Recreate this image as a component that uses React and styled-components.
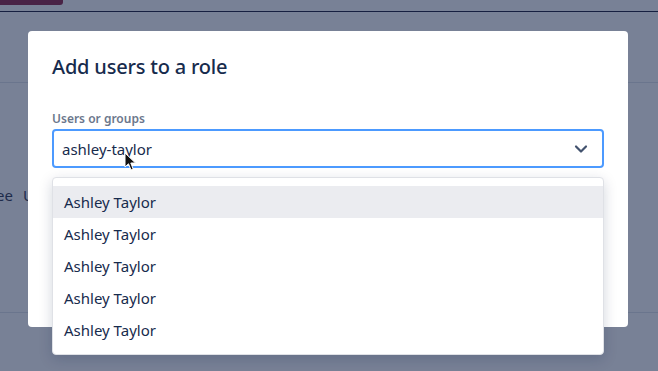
import { useState } from "react";
import styled, { createGlobalStyle } from "styled-components";

const GlobalStyle = createGlobalStyle`
  html, body {
    margin: 0;
    padding: 0;
    width: 658px;
    height: 371px;
    overflow: hidden;
    font-family: "Noto Sans", "Open Sans", sans-serif;
  }
`;

const Page = styled.div`
  position: relative;
  width: 658px;
  height: 371px;
  background: #ffffff;
  overflow: hidden;
`;

const TopBar = styled.div`
  height: 11px;
  border-bottom: 1px solid #0a0a2a;
  display: flex;
  align-items: flex-start;
`;

const RedButton = styled.div`
  width: 63px;
  height: 5px;
  background: #8b1538;
  border-radius: 0 0 3px 0;
`;

const Section = styled.div`
  height: ${(p) => p.h}px;
  box-sizing: border-box;
  border-bottom: 1px solid #dde1e8;
  display: flex;
  gap: 10px;
  margin-left: -4px;
  padding-top: ${(p) => p.pad || 0}px;
  font-size: 15px;
  line-height: 20px;
  color: #1f2a44;
`;

const Backdrop = styled.div`
  position: absolute;
  inset: 0;
  background: rgba(30, 45, 80, 0.6);
  padding: 31px 30px 0 28px;
`;

const Modal = styled.div`
  width: 600px;
  height: 296px;
  box-sizing: border-box;
  background: #ffffff;
  border-radius: 4px;
  padding: 22px 24px;
  display: flex;
  flex-direction: column;
`;

const Title = styled.h2`
  margin: 0;
  font-size: 20px;
  line-height: 28px;
  font-weight: 500;
  color: #172b4d;
  letter-spacing: -0.2px;
`;

const Field = styled.div`
  margin-top: 30px;
  position: relative;
  display: flex;
  flex-direction: column;
`;

const Label = styled.label`
  font-size: 12px;
  line-height: 16px;
  font-weight: 600;
  color: #6b778c;
  margin-bottom: 2px;
`;

const Select = styled.div`
  height: 39px;
  box-sizing: border-box;
  border: 2px solid #4c9aff;
  border-radius: 4px;
  display: flex;
  align-items: center;
  justify-content: space-between;
  padding: 0 14px 0 8px;
  font-size: 15px;
  color: #172b4d;
`;

const Menu = styled.ul`
  position: absolute;
  top: 66px;
  left: 0;
  right: 0;
  margin: 0;
  padding: 8px 0;
  list-style: none;
  background: #ffffff;
  border: 1px solid #dfe1e6;
  border-radius: 4px;
  box-shadow: 0 4px 14px rgba(9, 30, 66, 0.18);
`;

const Option = styled.li`
  height: 32px;
  display: flex;
  align-items: center;
  padding: 0 11px;
  font-size: 15px;
  color: #172b4d;
  background: ${(p) => (p.active ? "#ebecf0" : "#ffffff")};
`;

const Cursor = styled.svg`
  position: absolute;
  left: 124px;
  top: 152px;
`;

const Chevron = () => (
  <svg width="14" height="10" viewBox="0 0 14 10">
    <path d="M2 2.5 L7 7.5 L12 2.5" fill="none" stroke="#42526e" strokeWidth="2.2" strokeLinecap="round" strokeLinejoin="round" />
  </svg>
);

const options = ["Ashley Taylor", "Ashley Taylor", "Ashley Taylor", "Ashley Taylor", "Ashley Taylor"];

const App = () => {
  const [active] = useState(0);

  return (
    <Page>
      <GlobalStyle />
      <TopBar>
        <RedButton />
      </TopBar>
      <Section h={71} />
      <Section h={230} pad={102}>
        <span>ee</span>
        <span>Users</span>
      </Section>
      <Backdrop>
        <Modal>
          <Title>Add users to a role</Title>
          <Field>
            <Label>Users or groups</Label>
            <Select>
              <span>ashley-taylor</span>
              <Chevron />
            </Select>
            <Menu>
              {options.map((o, i) => (
                <Option key={i} active={i === active}>
                  {o}
                </Option>
              ))}
            </Menu>
          </Field>
        </Modal>
      </Backdrop>
      <Cursor width="13" height="20" viewBox="0 0 13 20">
        <path d="M1 1 L1 15 L4.5 11.8 L7 18 L9.2 17 L6.8 11 L11.5 11 Z" fill="#111" stroke="#fff" strokeWidth="1" strokeLinejoin="round" />
      </Cursor>
    </Page>
  );
};

export default App;
